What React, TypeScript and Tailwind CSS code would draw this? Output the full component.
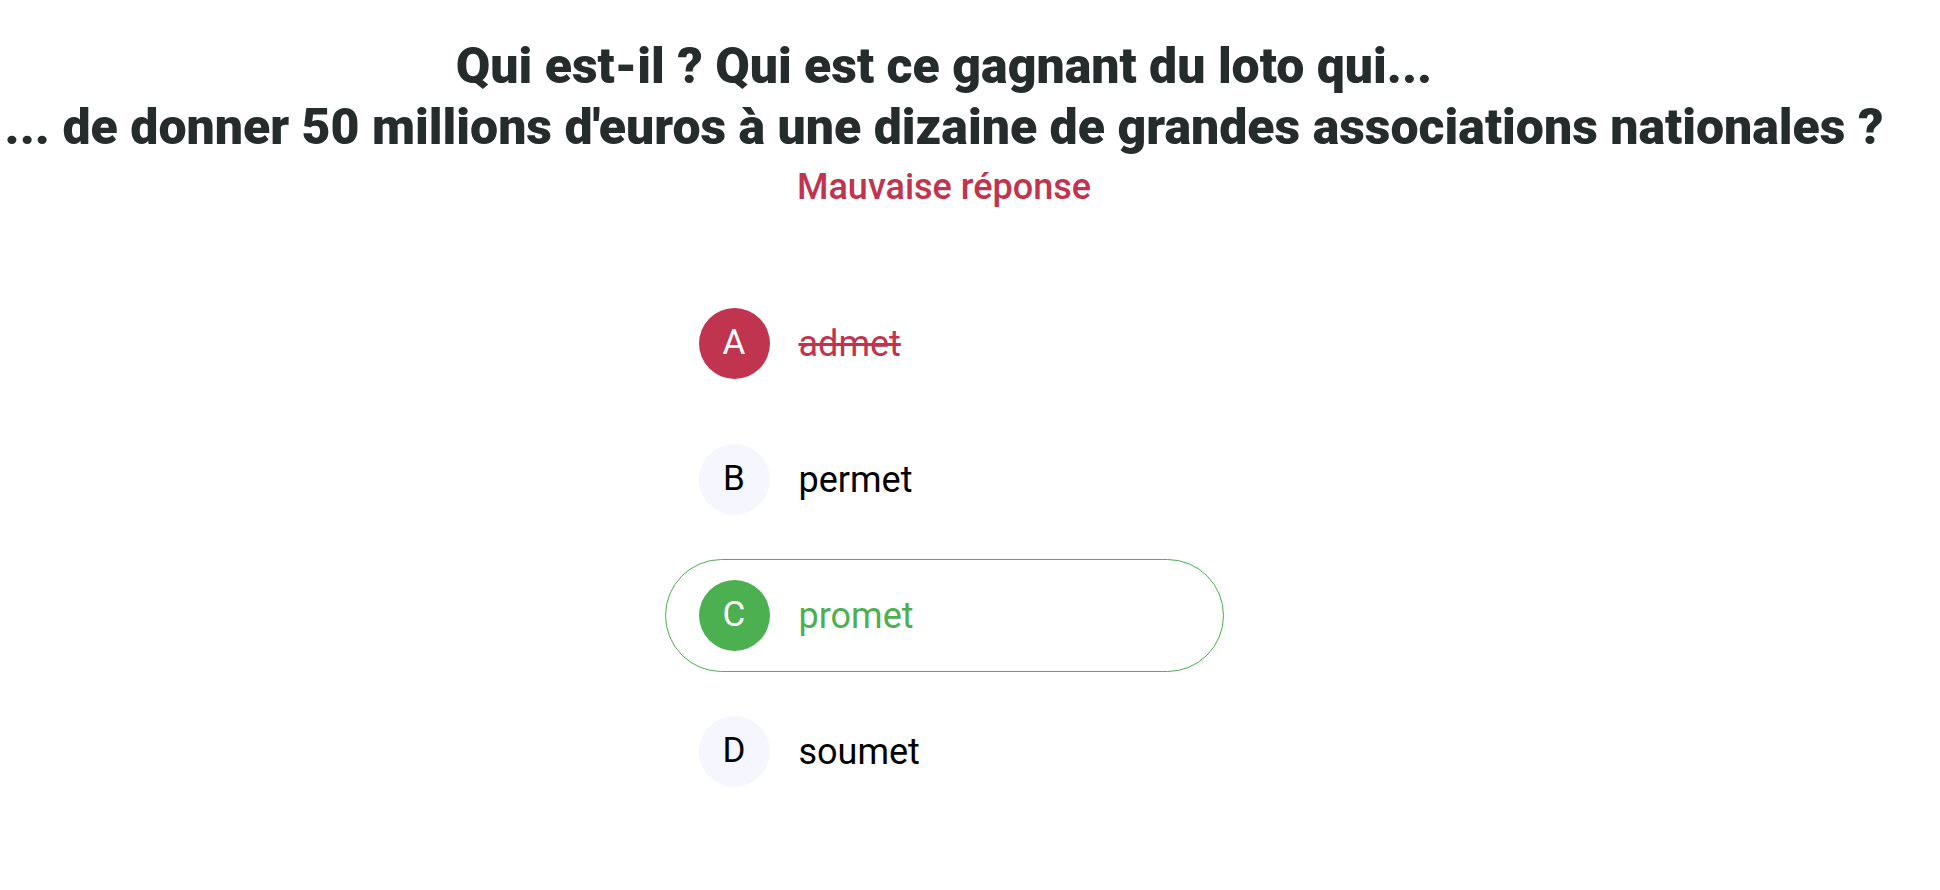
import React from 'react';

type Opt = { letter: string; text: string; state: 'wrong' | 'right' | 'idle' };

const options: Opt[] = [
    { letter: 'A', text: 'admet', state: 'wrong' },
    { letter: 'B', text: 'permet', state: 'idle' },
    { letter: 'C', text: 'promet', state: 'right' },
    { letter: 'D', text: 'soumet', state: 'idle' },
];

const Option = ({ letter, text, state }: Opt) => {
    const box =
        state === 'right'
            ? 'border-[1.5px] border-[#4caf50]'
            : 'border-[1.5px] border-transparent';
    const circle =
        state === 'wrong'
            ? 'bg-[#c0344f] text-white'
            : state === 'right'
              ? 'bg-[#4caf50] text-white'
              : 'bg-[#f5f6fe] text-black';
    const label =
        state === 'wrong'
            ? 'text-[#c0344f] line-through'
            : state === 'right'
              ? 'text-[#4caf50]'
              : 'text-black';
    return (
        <div className={`h-[113px] rounded-full flex items-center pl-[33px] gap-[29px] ${box}`}>
            <span className={`w-[71px] h-[71px] rounded-full flex items-center justify-center text-[35px] ${circle}`}>
                {letter}
            </span>
            <span className={`text-[36px] ${label}`}>{text}</span>
        </div>
    );
};

const App = () => {
    return (
        <div className="w-[1888px] min-h-[890px] bg-white pt-[36px] flex flex-col items-center font-['Roboto',sans-serif]">
            <h1 className="text-center text-[50px] font-black leading-[61px] text-[#262b2b]">
                Qui est-il ? Qui est ce gagnant du loto qui...
                <br />
                ... de donner 50 millions d'euros à une dizaine de grandes associations nationales ?
            </h1>
            <p className="mt-[2px] text-[36px] font-medium text-[#c0344f]">Mauvaise réponse</p>
            <div className="mt-[73px] w-[559px] flex flex-col gap-[23px]">
                {options.map((o) => (
                    <Option key={o.letter} {...o} />
                ))}
            </div>
        </div>
    );
};

export default App;
